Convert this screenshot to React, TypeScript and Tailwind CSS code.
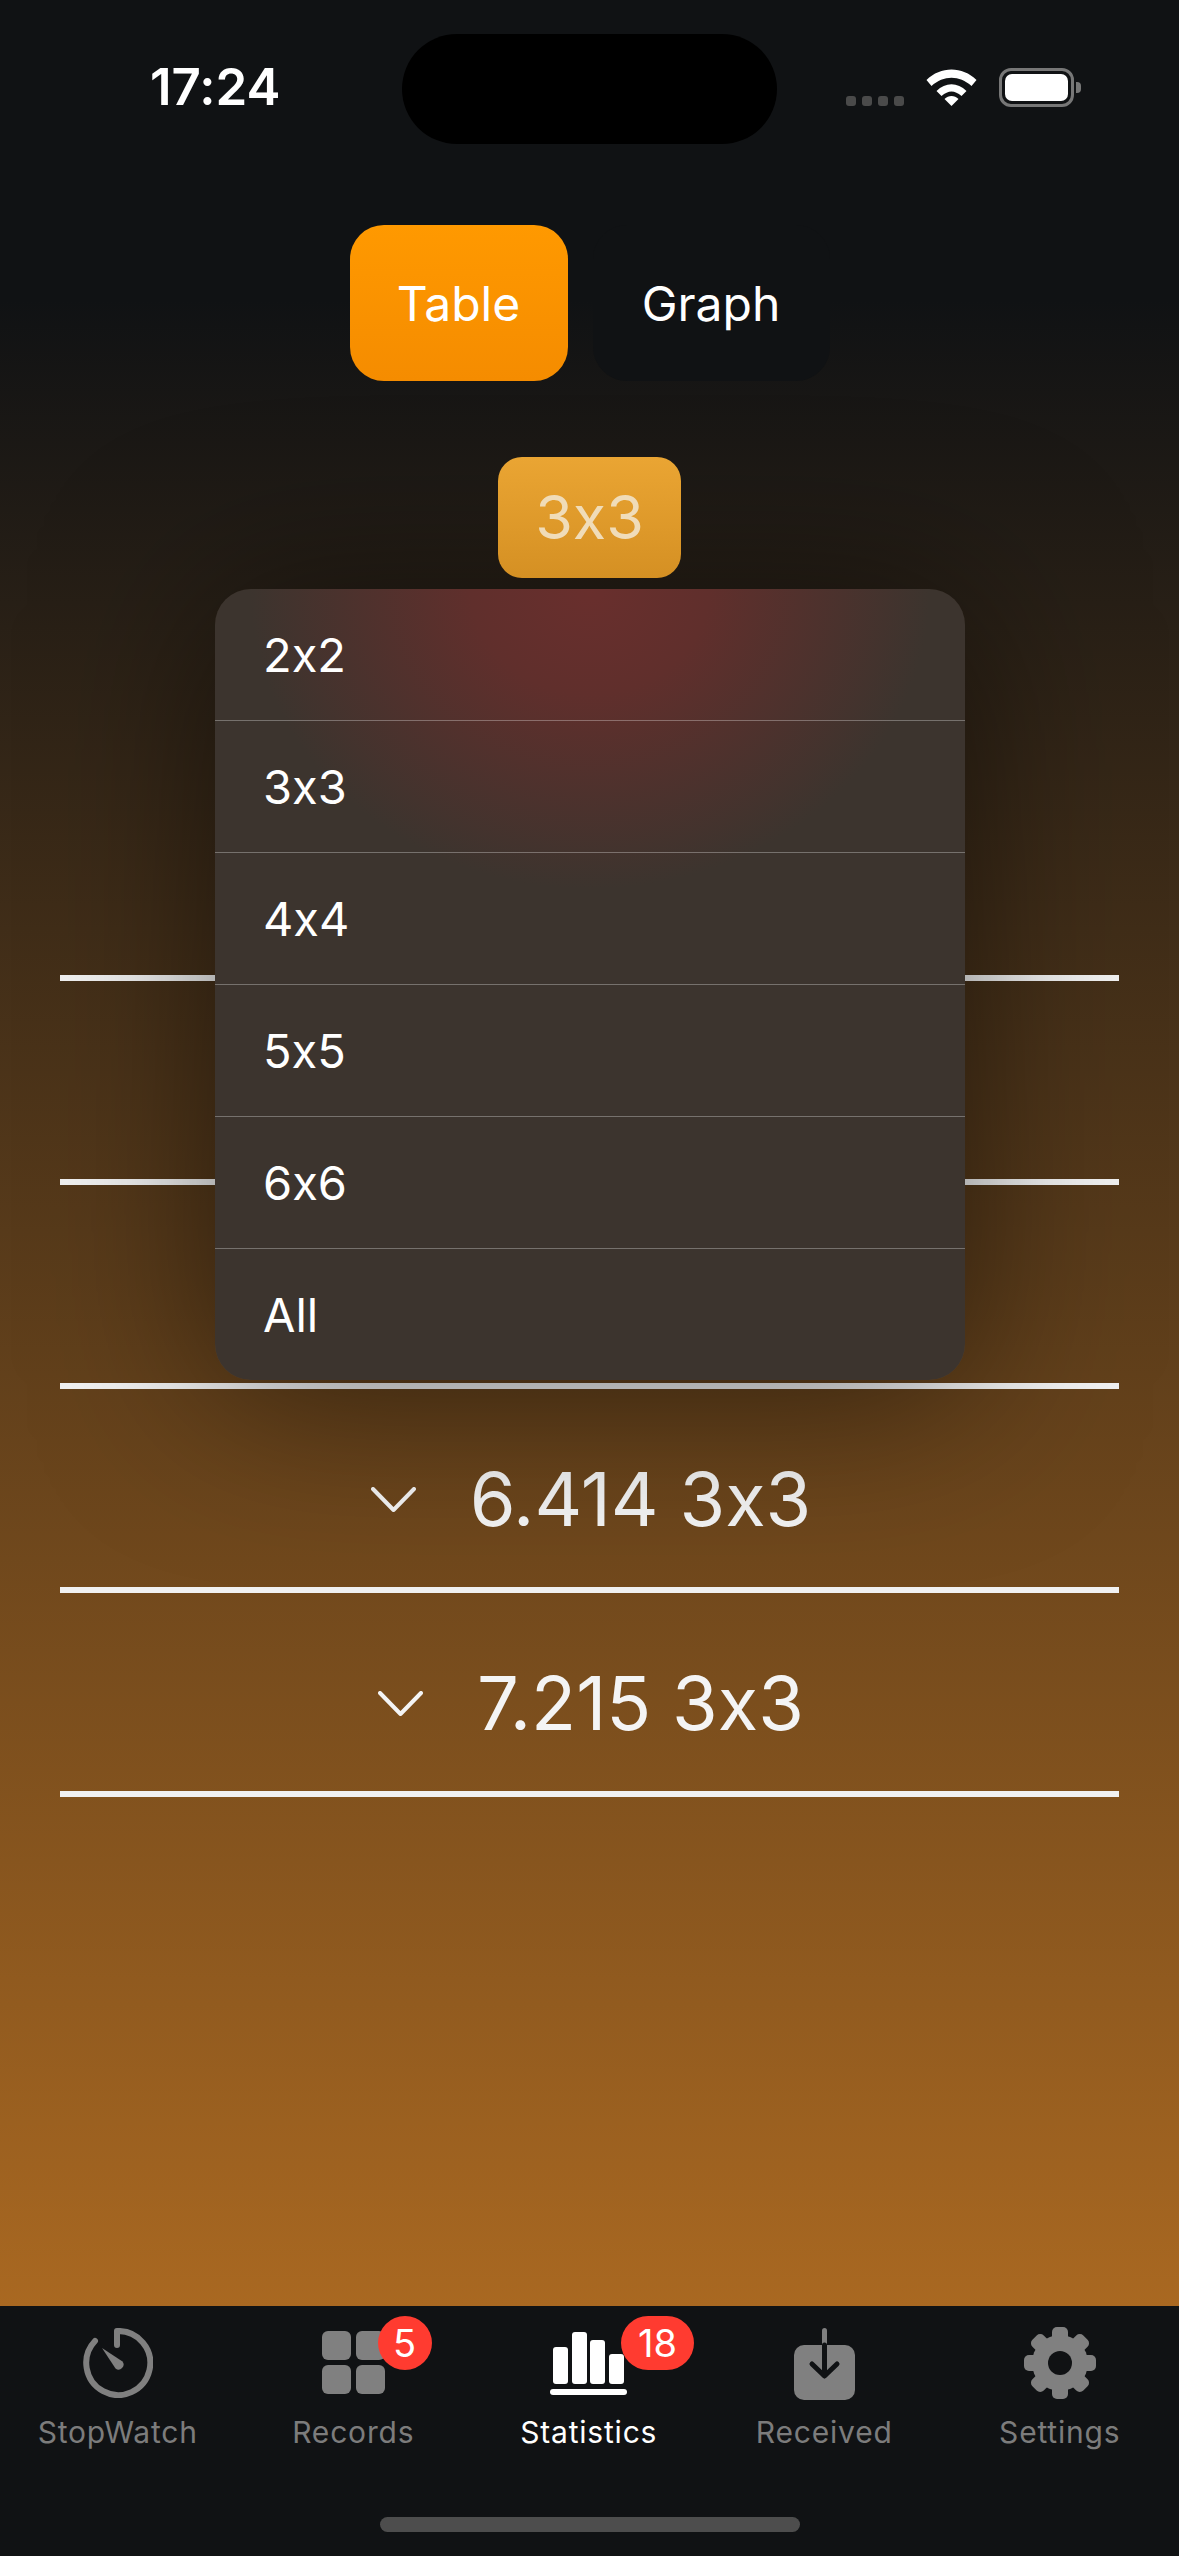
const font = 'font-["Inter","Liberation_Sans",sans-serif] [font-feature-settings:"calt"_0]';

const menuItems = ['2x2', '3x3', '4x4', '5x5', '6x6', 'All'];

function Chevron() {
  return (
    <svg width="45" height="25" viewBox="0 0 45 25" fill="none" stroke="#f4f4f4" strokeWidth="4" strokeLinecap="round" strokeLinejoin="round">
      <path d="M2 2 L22.5 23 L43 2" />
    </svg>
  );
}

function StopwatchIcon() {
  return (
    <svg className="mb-[2px]" width="70" height="70" viewBox="0 0 70 70" fill="none">
      <path d="M12 13 A32 32 0 1 0 34 3 L34 17" stroke="#808080" strokeWidth="6" strokeLinecap="round" strokeLinejoin="round" />
      <path d="M19 20 L39.5 33.5 A5 5 0 0 1 32.5 40.5 Z" fill="#808080" />
    </svg>
  );
}

function RecordsIcon() {
  return (
    <svg className="mb-[6px]" width="63" height="63" viewBox="0 0 63 63" fill="#808080">
      <rect x="0" y="0" width="29" height="29" rx="6" />
      <rect x="34" y="0" width="29" height="29" rx="6" />
      <rect x="0" y="34" width="29" height="29" rx="6" />
      <rect x="34" y="34" width="29" height="29" rx="6" />
    </svg>
  );
}

function StatsIcon() {
  return (
    <svg className="mb-[5px]" width="77" height="63" viewBox="0 0 77 63" fill="#fff">
      <rect x="3" y="15" width="15" height="37" rx="3" />
      <rect x="22" y="0" width="15" height="52" rx="3" />
      <rect x="40" y="8" width="15" height="44" rx="3" />
      <rect x="59" y="22" width="15" height="30" rx="3" />
      <rect x="0" y="57" width="77" height="6" rx="3" />
    </svg>
  );
}

function ReceivedIcon() {
  return (
    <svg width="61" height="72" viewBox="0 0 61 72" fill="none">
      <rect x="0" y="17" width="61" height="55" rx="10" fill="#808080" />
      <path d="M30.5 2.5 V17" stroke="#808080" strokeWidth="5" strokeLinecap="round" />
      <path d="M30.5 17 V47 M18 36 L30.5 48 L43 36" stroke="#101214" strokeWidth="5" strokeLinecap="round" strokeLinejoin="round" />
    </svg>
  );
}

function GearIcon() {
  const teeth = [0, 45, 90, 135, 180, 225, 270, 315];
  return (
    <svg className="mb-[1px]" width="72" height="72" viewBox="0 0 72 72" fill="#808080">
      {teeth.map((a) => (
        <rect key={a} x="28" y="0" width="16" height="20" rx="5" transform={`rotate(${a} 36 36)`} />
      ))}
      <circle cx="36" cy="36" r="28" />
      <circle cx="36" cy="36" r="12" fill="#101214" />
    </svg>
  );
}

function Tab({ label, active, icon, badge, badgeClass }: { label: string; active?: boolean; icon: React.ReactNode; badge?: string; badgeClass?: string }) {
  return (
    <div className="relative flex w-[235.5px] shrink-0 flex-col items-center">
      <div className="flex h-[78px] items-end justify-center">{icon}</div>
      {badge && (
        <span className={`absolute top-[-6px] flex h-[54px] items-center justify-center rounded-full bg-[#ff3b30] text-[38px] text-white ${badgeClass}`}>
          {badge}
        </span>
      )}
      <span className={`mt-[14px] text-[30px] leading-[36px] tracking-[0.8px] ${active ? 'text-white' : 'text-[#7c7c7c]'}`}>
        {label}
      </span>
    </div>
  );
}

function ResultRow({ value }: { value: string }) {
  return (
    <div className="flex h-[198px] items-center justify-center gap-[54px] pl-[3px] pt-[22px] text-[74px] text-[#f4f4f4]">
      <Chevron />
      <span>{value}</span>
    </div>
  );
}

export default function App() {
  return (
    <div className={`flex h-[2556px] w-[1179px] flex-col overflow-hidden bg-[linear-gradient(180deg,#101214_0,#101214_300px,#a96821_2306px)] text-white ${font}`}>
      <div className="flex h-[225px] shrink-0 items-start">
        <div className="flex w-full items-start pt-[34px]">
          <div className="w-[402px] pl-[150px] pt-[25px] text-[51px] font-semibold leading-[56px]">17:24</div>
          <div className="h-[110px] w-[375px] rounded-[55px] bg-black" />
          <div className="flex items-end pl-[69px] pt-[34px]">
            <div className="mb-[1px] flex gap-[6px]">
              <span className="h-[10px] w-[10px] rounded-[3px] bg-[#4a4a4a]" />
              <span className="h-[10px] w-[10px] rounded-[3px] bg-[#4a4a4a]" />
              <span className="h-[10px] w-[10px] rounded-[3px] bg-[#4a4a4a]" />
              <span className="h-[10px] w-[10px] rounded-[3px] bg-[#4a4a4a]" />
            </div>
            <svg className="mb-[1px] ml-[22px]" width="51" height="37" viewBox="0 0 50 37" fill="#fff">
              <path d="M0 11 C14 -3 36 -3 50 11 L45 17 C33 6 17 6 5 17 Z" />
              <path d="M10 22 C19 13 31 13 40 22 L35 27 C28 21 22 21 15 27 Z" />
              <path d="M18 30 C22 26 28 26 32 30 L25 37 Z" />
            </svg>
            <div className="ml-[22px] flex h-[39px] w-[75px] items-center justify-center rounded-[12px] border-[3px] border-[#777]">
              <div className="h-[27px] w-[63px] rounded-[7px] bg-white" />
            </div>
            <div className="mb-[14px] ml-[2px] h-[11px] w-[5px] rounded-r-[4px] bg-[#777]" />
          </div>
        </div>
      </div>

      <div className="flex shrink-0 justify-center gap-[25px]">
        <div className="flex h-[156px] w-[218px] items-center justify-center rounded-[34px] bg-[linear-gradient(180deg,#ff9900,#f58c00)] pt-[2px] text-[48px]">Table</div>
        <div className="flex h-[156px] w-[237px] items-center justify-center rounded-[34px] bg-[#101214] pt-[2px] text-[48px]">Graph</div>
      </div>

      <div className="relative mt-[76px] flex shrink-0 flex-col items-center">
        <div className="relative z-20 flex h-[121px] w-[183px] items-center justify-center rounded-[24px] bg-[linear-gradient(180deg,#eaa533,#d59023)] text-[61px] text-[#f0dcb8]">3x3</div>

        {/* dropdown floats over the list */}
        <div className="absolute left-[215px] top-[132px] z-10 w-[750px] overflow-hidden rounded-[36px] bg-[radial-gradient(ellipse_340px_300px_at_50%_0,#692f2d,#602f2c_35%,#3c342e_100%)] shadow-[0_10px_170px_rgba(0,0,0,0.5)]">
          {menuItems.map((item, i) => (
            <div key={item} className={`flex items-center pl-[48px] pt-[2px] text-[47px] ${i > 0 ? 'h-[132px] border-t border-white/30' : 'h-[131px]'}`}>
              {item}
            </div>
          ))}
        </div>

        <div className="mt-[397px] flex w-[1059px] flex-col">
          <div className="h-[6px] bg-[#f1f1f1]" />
          <div className="h-[198px]" />
          <div className="h-[6px] bg-[#f1f1f1]" />
          <div className="h-[198px]" />
          <div className="h-[6px] bg-[#f1f1f1]" />
          <ResultRow value="6.414 3x3" />
          <div className="h-[6px] bg-[#f1f1f1]" />
          <ResultRow value="7.215 3x3" />
          <div className="h-[6px] bg-[#f1f1f1]" />
        </div>
      </div>

      <div className="mt-auto flex h-[250px] shrink-0 flex-col bg-[#101214]">
        <div className="flex pt-[16px]">
          <Tab label="StopWatch" icon={<StopwatchIcon />} />
          <Tab label="Records" icon={<RecordsIcon />} badge="5" badgeClass="left-[142px] w-[54px]" />
          <Tab label="Statistics" active icon={<StatsIcon />} badge="18" badgeClass="left-[150px] w-[73px]" />
          <Tab label="Received" icon={<ReceivedIcon />} />
          <Tab label="Settings" icon={<GearIcon />} />
        </div>
        <div className="mx-auto mb-[24px] mt-auto h-[15px] w-[420px] rounded-full bg-[#4d4d4d]" />
      </div>
    </div>
  );
}
